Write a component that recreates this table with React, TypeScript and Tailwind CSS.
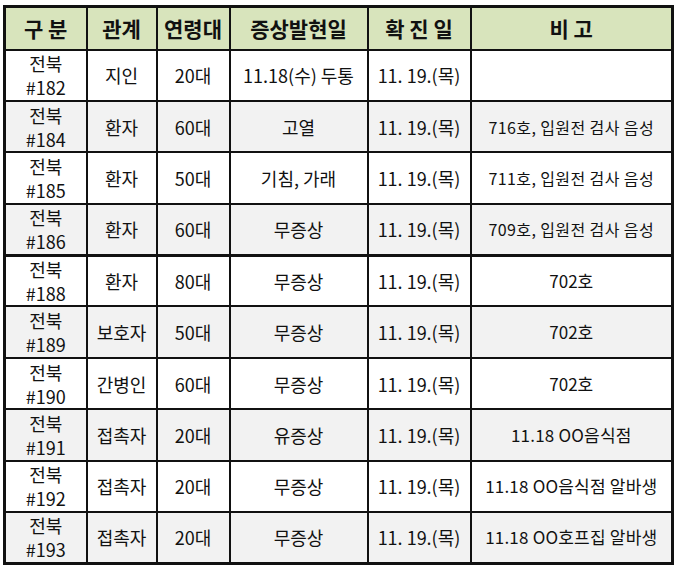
const rows = [
  { id: '#182', rel: '지인', age: '20대', sym: '11.18(수) 두통', note: '', size: '' },
  { id: '#184', rel: '환자', age: '60대', sym: '고열', note: '716호, 입원전 검사 음성', size: 'text-[16px] tracking-[0.4px]' },
  { id: '#185', rel: '환자', age: '50대', sym: '기침, 가래', note: '711호, 입원전 검사 음성', size: 'text-[16px] tracking-[0.4px]' },
  { id: '#186', rel: '환자', age: '60대', sym: '무증상', note: '709호, 입원전 검사 음성', size: 'text-[16px] tracking-[0.4px]' },
  { id: '#188', rel: '환자', age: '80대', sym: '무증상', note: '702호', size: 'text-[17px]' },
  { id: '#189', rel: '보호자', age: '50대', sym: '무증상', note: '702호', size: 'text-[17px]' },
  { id: '#190', rel: '간병인', age: '60대', sym: '무증상', note: '702호', size: 'text-[17px]' },
  { id: '#191', rel: '접촉자', age: '20대', sym: '유증상', note: '11.18 OO음식점', size: 'text-[17px] tracking-[0.2px]' },
  { id: '#192', rel: '접촉자', age: '20대', sym: '무증상', note: '11.18 OO음식점 알바생', size: 'text-[17px] tracking-[0.2px]' },
  { id: '#193', rel: '접촉자', age: '20대', sym: '무증상', note: '11.18 OO호프집 알바생', size: 'text-[17px] tracking-[0.2px]' },
]

const heads = ['구 분', '관계', '연령대', '증상발현일', '확 진 일', '비 고']

export default function App() {
  return (
    <main className="min-h-screen bg-white pl-[3px] pt-[5px] font-['Noto_Sans_CJK_KR','Noto_Sans',sans-serif] text-[#111]">
      <table className="w-[671px] table-fixed border-collapse border-[3px] border-[#111] text-center">
        <colgroup>
          <col className="w-[82px]" />
          <col className="w-[70px]" />
          <col className="w-[73px]" />
          <col className="w-[138px]" />
          <col className="w-[103px]" />
          <col />
        </colgroup>
        <thead>
          <tr className="h-[43px] bg-[#d8e4bc]">
            {heads.map((h) => (
              <th key={h} className="border-2 border-[#111] p-0 text-[21px] font-bold leading-none">
                {h}
              </th>
            ))}
          </tr>
        </thead>
        <tbody>
          {rows.map((r, i) => (
            <tr
              key={r.id}
              className={`h-[51.4px] text-[18px] leading-[24px] ${i % 2 === 1 ? 'bg-[#f2f2f2]' : 'bg-white'} ${i === 3 ? 'border-b-[3px] border-b-[#111]' : ''}`}
            >
              <td className="border-2 border-[#111] p-0">
                전북
                <br />
                {r.id}
              </td>
              <td className="border-2 border-[#111] p-0">{r.rel}</td>
              <td className="border-2 border-[#111] p-0">{r.age}</td>
              <td className="border-2 border-[#111] p-0">{r.sym}</td>
              <td className="border-2 border-[#111] p-0">11. 19.(목)</td>
              <td className={`border-2 border-[#111] p-0 ${r.size}`}>{r.note}</td>
            </tr>
          ))}
        </tbody>
      </table>
    </main>
  )
}
